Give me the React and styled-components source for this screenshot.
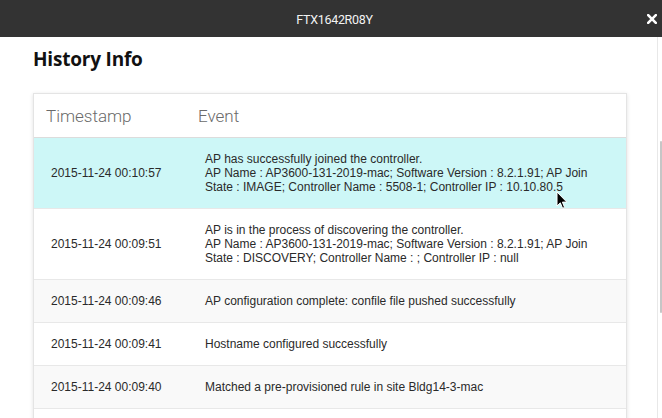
import React from 'react';
import styled, { createGlobalStyle } from 'styled-components';

const GlobalStyle = createGlobalStyle`
  html, body {
    margin: 0;
    padding: 0;
    background: #fff;
    overflow: hidden;
  }
  body {
    font-family: "Liberation Sans", Arial, sans-serif;
  }
`;

const Modal = styled.div`
  position: relative;
  width: 662px;
  height: 418px;
  display: flex;
  flex-direction: column;
  background: #fff;
  overflow: hidden;
`;

const TitleBar = styled.div`
  height: 37px;
  flex-shrink: 0;
  background: #333333;
  display: grid;
  grid-template-columns: 1fr auto 1fr;
  align-items: center;
  padding: 0 5px 0 12px;
  box-sizing: border-box;
`;

const Title = styled.div`
  grid-column: 2;
  color: #f2f2f2;
  font-family: Roboto, "Liberation Sans", sans-serif;
  font-size: 12.5px;
  letter-spacing: -0.3px;
  margin-top: 1px;
`;

const CloseButton = styled.button`
  grid-column: 3;
  justify-self: end;
  width: 10px;
  height: 10px;
  padding: 0;
  border: none;
  background: none;
  display: flex;
  cursor: pointer;
  margin-top: 1px;
`;

const Body = styled.div`
  flex: 1;
  display: flex;
  min-height: 0;
`;

const Content = styled.div`
  flex: 1;
  padding: 9px 30px 0 33px;
  min-width: 0;
`;

const Heading = styled.h2`
  margin: 0 0 21px;
  font-family: "Open Sans", "Liberation Sans", sans-serif;
  font-weight: 700;
  font-size: 19px;
  line-height: 26px;
  color: #111;
  letter-spacing: -0.2px;
`;

const Card = styled.div`
  border: 1px solid #e4e4e4;
  box-shadow: 0 1px 4px rgba(0, 0, 0, 0.12);
  background: #fff;
  min-height: 400px;
`;

const Row = styled.div`
  display: grid;
  grid-template-columns: 153px 1fr;
  align-items: center;
  border-bottom: 1px solid ${p => (p.$head ? '#dcdcdc' : '#e8e8e8')};
  background: ${p => (p.$active ? '#cdf7f7' : p.$odd ? '#f9f9f9' : '#fff')};
  min-height: ${p => (p.$head ? '43px' : '42px')};
`;

const HeadCell = styled.div`
  padding-left: ${p => p.$pad}px;
  font-family: Roboto, "Liberation Sans", sans-serif;
  font-weight: 300;
  font-size: 17px;
  color: #6a6a6a;
`;

const Cell = styled.div`
  padding: 14px 0 14px ${p => p.$pad}px;
  font-size: 12px;
  line-height: 14px;
  color: #2a2a2a;
`;

const Line = styled.div`
  white-space: nowrap;
`;

const ScrollTrack = styled.div`
  width: 5px;
  flex-shrink: 0;
  border-left: 1px solid #e8e8e8;
  padding-left: 2px;
  box-sizing: border-box;
`;

const Thumb = styled.div`
  width: 2px;
  height: 172px;
  margin-top: 104px;
  background: #c6c6c6;
  border-radius: 1px;
`;

const Pointer = styled.svg`
  position: absolute;
  left: 556px;
  top: 191px;
  pointer-events: none;
`;

const events = [
  {
    time: '2015-11-24 00:10:57',
    lines: [
      'AP has successfully joined the controller.',
      'AP Name : AP3600-131-2019-mac; Software Version : 8.2.1.91; AP Join',
      'State : IMAGE; Controller Name : 5508-1; Controller IP : 10.10.80.5',
    ],
    active: true,
  },
  {
    time: '2015-11-24 00:09:51',
    lines: [
      'AP is in the process of discovering the controller.',
      'AP Name : AP3600-131-2019-mac; Software Version : 8.2.1.91; AP Join',
      'State : DISCOVERY; Controller Name : ; Controller IP : null',
    ],
  },
  {
    time: '2015-11-24 00:09:46',
    lines: ['AP configuration complete: confile file pushed successfully'],
  },
  {
    time: '2015-11-24 00:09:41',
    lines: ['Hostname configured successfully'],
  },
  {
    time: '2015-11-24 00:09:40',
    lines: ['Matched a pre-provisioned rule in site Bldg14-3-mac'],
  },
];

function App() {
  return (
    <Modal>
      <GlobalStyle />
      <TitleBar>
        <Title>FTX1642R08Y</Title>
        <CloseButton aria-label="Close">
          <svg width="10" height="10" viewBox="0 0 10 10">
            <path d="M1.2 1.2 L8.8 8.8 M8.8 1.2 L1.2 8.8" stroke="#fff" strokeWidth="2.6" strokeLinecap="square" />
          </svg>
        </CloseButton>
      </TitleBar>
      <Body>
        <Content>
          <Heading>History Info</Heading>
          <Card>
            <Row $head>
              <HeadCell $pad={12}>Timestamp</HeadCell>
              <HeadCell $pad={11}>Event</HeadCell>
            </Row>
            {events.map((ev, i) => (
              <Row key={i} $odd={i % 2 === 0} $active={ev.active}>
                <Cell $pad={17}>{ev.time}</Cell>
                <Cell $pad={18}>
                  {ev.lines.map((l, j) => (
                    <Line key={j}>{l}</Line>
                  ))}
                </Cell>
              </Row>
            ))}
          </Card>
        </Content>
        <ScrollTrack>
          <Thumb />
        </ScrollTrack>
      </Body>
      <Pointer width="12" height="19" viewBox="0 0 12 19">
        <path d="M1 1 L1 15 L4.3 11.8 L6.6 17.3 L8.6 16.4 L6.4 11.1 L10.8 11.1 Z" fill="#000" stroke="#fff" strokeWidth="1" strokeLinejoin="round" />
      </Pointer>
    </Modal>
  );
}

export default App;
